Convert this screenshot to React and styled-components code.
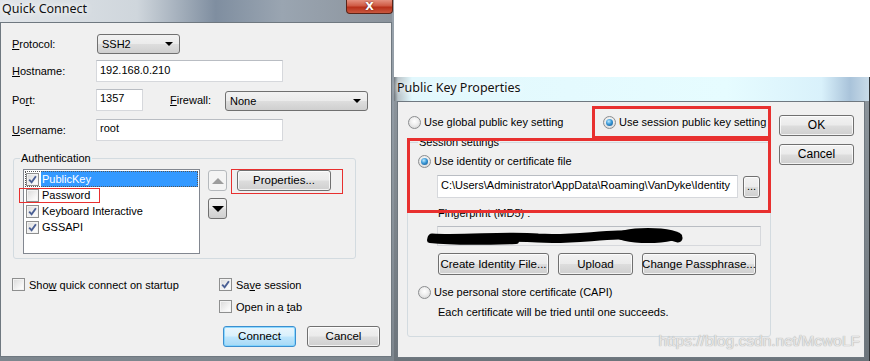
import React from 'react'
import styled, { createGlobalStyle } from 'styled-components'

const GlobalStyle = createGlobalStyle`
  html, body {
    margin: 0;
    padding: 0;
    background: #fff;
  }
  body {
    width: 870px;
    height: 361px;
    overflow: hidden;
    font-family: "Liberation Sans", Arial, sans-serif;
    font-size: 11px;
    color: #000;
  }
  * {
    box-sizing: border-box;
  }
`

const Page = styled.div`
  position: relative;
  display: flex;
  width: 870px;
  height: 361px;
  background: #fff;
`

/* ---------- window chrome ---------- */

const LeftWin = styled.div`
  display: flex;
  flex-direction: column;
  width: 394px;
  height: 361px;
  padding: 0 2px 4px 0;
  background: linear-gradient(to bottom, #9aa4ad, #7d868e);
`

const TitleBar = styled.div`
  display: flex;
  align-items: flex-start;
  height: ${p => p.$h}px;
  padding-left: ${p => p.$pl}px;
  background: ${p => p.$bg};
  flex: none;
`

const Title = styled.div`
  font-family: "Noto Sans", "Open Sans", sans-serif;
  font-size: 12.5px;
  line-height: ${p => p.$lh}px;
  color: #111;
  text-shadow: 0 0 5px #fff, 0 0 8px rgba(255, 255, 255, 0.9);
  white-space: nowrap;
`

const CloseBtn = styled.div`
  display: flex;
  align-items: center;
  justify-content: center;
  margin-left: auto;
  margin-right: -1px;
  width: 47px;
  height: 14px;
  border: 1px solid #5a2418;
  border-top: none;
  border-radius: 0 0 4px 4px;
  background: linear-gradient(#e4907f 0%, #cf5a44 45%, #b8301a 55%, #c9583f 100%);
  color: #fff;
  font-family: "DejaVu Sans", sans-serif;
  font-weight: bold;
  font-size: 11px;
  line-height: 12px;
  text-shadow: 0 0 2px #5a1a10;
`

const Body = styled.div`
  flex: 1;
  display: flex;
  flex-direction: ${p => p.$dir || 'column'};
  border: 1px solid #6f7880;
  background: #f0f0f0;
  padding: ${p => p.$p};
`

const RightCol = styled.div`
  flex: 1;
  display: flex;
  flex-direction: column;
`

const Desktop = styled.div`
  height: 77px;
  background: #fff;
  flex: none;
`

const RightWin = styled.div`
  flex: 1;
  display: flex;
  flex-direction: column;
  background: linear-gradient(to bottom, #8e969d, #6c747b);
  border-right: 1px solid #2e3134;
`

const RightFrame = styled.div`
  flex: 1;
  display: flex;
  padding: 0 4px 3px 3px;
`

/* ---------- controls ---------- */

const Row = styled.div`
  display: flex;
  align-items: ${p => p.$align || 'center'};
  height: ${p => p.$h || 20}px;
  margin-top: ${p => p.$mt || 0}px;
  margin-left: ${p => p.$ml || 0}px;
  gap: ${p => p.$gap || 0}px;
  flex: none;
`

const Label = styled.div`
  width: ${p => p.$w}px;
  margin-left: ${p => p.$ml || 0}px;
  white-space: nowrap;
  flex: none;
`

const Combo = styled.div`
  display: flex;
  align-items: center;
  justify-content: space-between;
  width: ${p => p.$w}px;
  height: 20px;
  margin-left: ${p => p.$ml || 0}px;
  margin-top: ${p => p.$mt || 0}px;
  padding: 0 6px 0 4px;
  border: 1px solid #707070;
  border-radius: 3px;
  background: linear-gradient(#f2f2f2 0%, #ebebeb 48%, #dddddd 52%, #cfcfcf 100%);
  flex: none;
`

const Caret = styled.span`
  width: 0;
  height: 0;
  border-left: 4px solid transparent;
  border-right: 4px solid transparent;
  border-top: 4px solid #000;
`

const TextBox = styled.div`
  width: ${p => p.$w}px;
  height: ${p => p.$h || 22}px;
  margin-left: ${p => p.$ml || 0}px;
  margin-top: ${p => p.$mt || 0}px;
  padding: ${p => p.$pt || 3}px 3px 0 3px;
  border: 1px solid #d6d8dc;
  border-top-color: #b9bdc3;
  background: ${p => (p.$disabled ? '#f0f0f0' : '#fff')};
  white-space: nowrap;
  overflow: hidden;
  flex: none;
`

const Btn = styled.button`
  display: flex;
  align-items: center;
  justify-content: center;
  width: ${p => p.$w}px;
  height: ${p => p.$h || 21}px;
  margin: ${p => p.$m || 0};
  padding: 0 0 1px 0;
  font: inherit;
  font-size: ${p => p.$fs || 11}px;
  color: #000;
  border: 1px solid ${p => (p.$default ? '#3c8fcf' : '#707070')};
  border-radius: 3px;
  background: ${p =>
    p.$default
      ? 'linear-gradient(#eaf6fd 0%, #d9f0fc 48%, #bee6fd 52%, #a7d9f5 100%)'
      : 'linear-gradient(#f2f2f2 0%, #ebebeb 48%, #dddddd 52%, #cfcfcf 100%)'};
  box-shadow: inset 0 0 0 1px ${p => (p.$default ? 'rgba(120, 210, 255, 0.8)' : 'rgba(255, 255, 255, 0.75)')};
  white-space: nowrap;
  flex: none;
`

const ArrowBtn = styled.div`
  display: flex;
  align-items: center;
  justify-content: center;
  width: 19px;
  height: 21px;
  border: 1px solid ${p => (p.$disabled ? '#b5b9bd' : '#707070')};
  border-radius: 3px;
  background: ${p =>
    p.$disabled
      ? '#f4f4f4'
      : 'linear-gradient(#f2f2f2 0%, #ebebeb 48%, #dddddd 52%, #cfcfcf 100%)'};
`

const Tri = styled.span`
  width: 0;
  height: 0;
  border-left: 6px solid transparent;
  border-right: 6px solid transparent;
  ${p =>
    p.$up
      ? `border-bottom: 6px solid ${p.$disabled ? '#9d9d9d' : '#000'};`
      : `border-top: 6px solid ${p.$disabled ? '#9d9d9d' : '#000'};`}
`

const Box = styled.span`
  display: inline-flex;
  align-items: center;
  justify-content: center;
  width: 13px;
  height: 13px;
  border: 1px solid #8e8f8f;
  background: linear-gradient(135deg, #d9d9d9 0%, #f7f7f7 70%, #ffffff 100%);
  box-shadow: inset 0 0 0 1px #f3f3f3;
  flex: none;
`

const CheckBox = ({ on }) => (
  <Box>
    {on && (
      <svg width="9" height="9" viewBox="0 0 9 9">
        <path d="M1.2 4.6 L3.6 7.3 L7.9 1.2" fill="none" stroke="#4a5f94" strokeWidth="1.9" />
      </svg>
    )}
  </Box>
)

const RadioDot = styled.span`
  display: inline-flex;
  align-items: center;
  justify-content: center;
  width: 13px;
  height: 13px;
  border-radius: 50%;
  border: 1px solid #8b8d8f;
  background: radial-gradient(circle at 50% 40%, #ffffff 0%, #f0f0f0 40%, #cfcfcf 100%);
  flex: none;
  &::after {
    content: '';
    display: ${p => (p.$on ? 'block' : 'none')};
    width: 7px;
    height: 7px;
    border-radius: 50%;
    background: radial-gradient(circle at 40% 35%, #bde9ff 0%, #3a98d6 45%, #0d4c86 100%);
  }
`

const OptionRow = styled.div`
  display: flex;
  align-items: center;
  gap: ${p => p.$gap || 3}px;
  width: ${p => (p.$w ? `${p.$w}px` : 'auto')};
  height: ${p => p.$h || 20}px;
  margin-left: ${p => p.$ml || 0}px;
  margin-top: ${p => p.$mt || 0}px;
  white-space: nowrap;
  flex: none;
`

const Option = ({ control, children, ...rest }) => (
  <OptionRow {...rest}>
    {control}
    <span>{children}</span>
  </OptionRow>
)

const Group = styled.fieldset`
  width: ${p => p.$w}px;
  height: ${p => (p.$h ? `${p.$h}px` : 'auto')};
  margin: ${p => p.$m};
  padding: ${p => p.$p};
  border: 1px solid #d3dbe0;
  border-radius: 3px;
  min-width: 0;
  flex: none;
`

const Legend = styled.legend`
  padding: 0 1px;
  margin-left: ${p => p.$ml}px;
  font-size: 11px;
  line-height: 13px;
`

const ListBox = styled.div`
  width: 177px;
  height: 85px;
  padding: 1px;
  border: 1px solid #828790;
  background: #fff;
  flex: none;
`

const ListItem = styled.div`
  display: flex;
  align-items: center;
  height: 16px;
  padding-left: 1px;
  outline: ${p => (p.$focus ? '1px dotted #555' : 'none')};
  outline-offset: -1px;
`

const ItemText = styled.span`
  flex: ${p => (p.$sel ? 1 : 'none')};
  height: 16px;
  line-height: 16px;
  margin-left: 2px;
  padding-left: 1px;
  background: ${p => (p.$sel ? '#3399ff' : 'transparent')};
  color: ${p => (p.$sel ? '#fff' : '#000')};
`

const Col = styled.div`
  display: flex;
  flex-direction: column;
  gap: ${p => p.$gap || 0}px;
  margin-left: ${p => p.$ml || 0}px;
  margin-top: ${p => p.$mt || 0}px;
  flex: none;
`

const ChecksGrid = styled.div`
  display: grid;
  grid-template-columns: 207px auto;
  row-gap: 9px;
  margin-top: ${p => p.$mt}px;
`

const ButtonBar = styled.div`
  display: flex;
  justify-content: flex-end;
  gap: 11px;
  margin-top: ${p => p.$mt}px;
  padding-right: 11px;
`

const Text = styled.div`
  height: ${p => p.$h || 14}px;
  line-height: ${p => p.$h || 14}px;
  margin-left: ${p => p.$ml || 0}px;
  margin-top: ${p => p.$mt || 0}px;
  white-space: nowrap;
`

/* ---------- overlays ---------- */

const Annot = styled.div`
  position: absolute;
  left: ${p => p.$x}px;
  top: ${p => p.$y}px;
  width: ${p => p.$w}px;
  height: ${p => p.$h}px;
  border: ${p => p.$b}px solid #e8302f;
  pointer-events: none;
`

const Scribble = styled.svg`
  position: absolute;
  left: 426px;
  top: 226px;
`

const Watermark = styled.div`
  position: absolute;
  right: 10px;
  top: 332px;
  font-family: "Liberation Sans", Arial, sans-serif;
  font-size: 15.5px;
  color: #e6e6e6;
  text-shadow: 0 0 1px #a9a9a9, 0 0 1px #bdbdbd;
  white-space: nowrap;
`

const authItems = [
  { name: 'PublicKey', on: true, sel: true },
  { name: 'Password', on: false },
  { name: 'Keyboard Interactive', on: true },
  { name: 'GSSAPI', on: true }
]

const QuickConnect = () => (
  <LeftWin>
    <TitleBar $h={22} $pl={2} $bg="linear-gradient(to right, #e1e5e9 0%, #cfd6dc 35%, #7f8ea0 55%, #9aa5b1 72%, #8b939c 100%)">
      <Title $lh={17}>Quick Connect</Title>
      <CloseBtn>X</CloseBtn>
    </TitleBar>
    <Body $p="11px 0 0 11px">
      <Row $h={20}>
        <Label $w={84}><u>P</u>rotocol:</Label>
        <Combo $w={83} $ml={1}>SSH2<Caret /></Combo>
      </Row>
      <Row $h={22} $mt={6}>
        <Label $w={84}><u>H</u>ostname:</Label>
        <TextBox $w={187}>192.168.0.210</TextBox>
      </Row>
      <Row $h={22} $mt={7}>
        <Label $w={84}>Po<u>r</u>t:</Label>
        <TextBox $w={47} $pt={2}>1357</TextBox>
        <Label $w={55} $ml={27}><u>F</u>irewall:</Label>
        <Combo $w={143} $mt={2}>None<Caret /></Combo>
      </Row>
      <Row $h={22} $mt={8}>
        <Label $w={84}><u>U</u>sername:</Label>
        <TextBox $w={187} $pt={2}>root</TextBox>
      </Row>
      <Group $w={343} $m="11px 0 0 1px" $p="4px 0 4px 9px">
        <Legend $ml={-3}>Authentication</Legend>
        <Row $h={85} $align="flex-start">
          <ListBox>
            {authItems.map(it => (
              <ListItem key={it.name} $focus={it.sel}>
                <CheckBox on={it.on} />
                <ItemText $sel={it.sel}>{it.name}</ItemText>
              </ListItem>
            ))}
          </ListBox>
          <Col $gap={7} $ml={8} $mt={1}>
            <ArrowBtn $disabled><Tri $up $disabled /></ArrowBtn>
            <ArrowBtn><Tri /></ArrowBtn>
          </Col>
          <Btn $w={94} $fs={11.5} $m="1px 0 0 10px">Properties...</Btn>
        </Row>
      </Group>
      <ChecksGrid $mt={19}>
        <Option $h={13} $gap={4} control={<CheckBox />}>Sho<u>w</u> quick connect on startup</Option>
        <Option $h={13} $gap={4} control={<CheckBox on />}>Sa<u>v</u>e session</Option>
        <span />
        <Option $h={13} $gap={4} control={<CheckBox />}>Open in a <u>t</u>ab</Option>
      </ChecksGrid>
      <ButtonBar $mt={13}>
        <Btn $w={73} $fs={11.5} $default>Connect</Btn>
        <Btn $w={73} $fs={11.5}>Cancel</Btn>
      </ButtonBar>
    </Body>
  </LeftWin>
)

const PublicKeyProps = () => (
  <RightWin>
    <TitleBar $h={24} $pl={3} $bg="linear-gradient(to right, #6f767c 0px, #b9c4c9 4px, #e2f8fd 18px, #e6fcff 70%, #d9f1fb 90%, #a9c3da 96%, #c9dbe8 100%)">
      <Title $lh={21}>Public Key Properties</Title>
    </TitleBar>
    <RightFrame>
      <Body $p="10px 0 0 9px" $dir="row">
        <Col>
          <Row $h={20} $ml={1}>
            <Option $w={195} control={<RadioDot />}>Use global public key setting</Option>
            <Option control={<RadioDot $on />}>Use session public key setting</Option>
          </Row>
          <Group $w={364} $h={201} $m="4px 0 0 0" $p="3px 0 0 10px">
            <Legend $ml={0}>Session settings</Legend>
            <Option $h={18} control={<RadioDot $on />}>Use identity or certificate file</Option>
            <Row $h={23} $mt={5} $ml={19} $gap={5}>
              <TextBox $w={301} $h={23}>C:\Users\Administrator\AppData\Roaming\VanDyke\Identity</TextBox>
              <Btn $w={17} $h={22}>...</Btn>
            </Row>
            <Text $ml={20} $mt={8}>Fingerprint (MD5) :</Text>
            <TextBox $w={324} $h={20} $ml={19} $mt={6} $disabled />
            <Row $h={22} $mt={7} $ml={20} $gap={9}>
              <Btn $w={111} $h={22} $fs={11.5}>Create Identity File...</Btn>
              <Btn $w={75} $h={22} $fs={11.5}>Upload</Btn>
              <Btn $w={114} $h={22} $fs={11.5}>Change Passphrase...</Btn>
            </Row>
            <Option $h={18} $mt={8} control={<RadioDot />}>Use personal store certificate (CAPI)</Option>
            <Text $ml={20} $mt={4}>Each certificate will be tried until one succeeds.</Text>
          </Group>
        </Col>
        <Col $gap={8} $ml={8} $mt={3}>
          <Btn $w={75} $fs={12}>OK</Btn>
          <Btn $w={75} $fs={12}>Cancel</Btn>
        </Col>
      </Body>
    </RightFrame>
  </RightWin>
)

const App = () => (
  <Page>
    <GlobalStyle />
    <QuickConnect />
    <RightCol>
      <Desktop />
      <PublicKeyProps />
    </RightCol>

    <Annot $x={19} $y={188} $w={81} $h={15} $b={1} />
    <Annot $x={231} $y={169} $w={112} $h={25} $b={1} />
    <Annot $x={592} $y={106} $w={179} $h={33} $b={3} />
    <Annot $x={407} $y={138} $w={364} $h={75} $b={3} />

    <Scribble width="262" height="22" viewBox="0 0 262 22">
      <path d="M6 12 C 40 14, 80 9, 112 12 C 140 14, 165 10, 192 9 C 222 8, 240 8, 252 12" fill="none" stroke="#000" strokeWidth="9" strokeLinecap="round" />
      <ellipse cx="222" cy="9.5" rx="34" ry="7.5" fill="#000" />
      <path d="M4 14 C 30 17, 60 16, 90 15" fill="none" stroke="#000" strokeWidth="6" strokeLinecap="round" />
    </Scribble>

    <Watermark>https://blog.csdn.net/McwoLF</Watermark>
  </Page>
)

export default App
